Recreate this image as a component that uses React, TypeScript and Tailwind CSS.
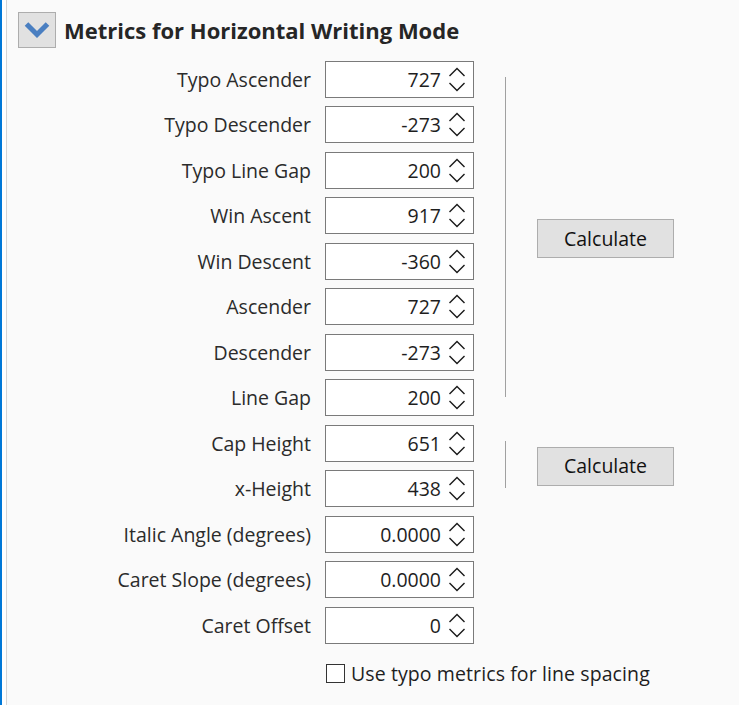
const font = { fontFamily: '"Segoe UI", "Open Sans", "Noto Sans", sans-serif' };

const groupA = [
  ['Typo Ascender', '727'],
  ['Typo Descender', '-273'],
  ['Typo Line Gap', '200'],
  ['Win Ascent', '917'],
  ['Win Descent', '-360'],
  ['Ascender', '727'],
  ['Descender', '-273'],
  ['Line Gap', '200'],
];

const groupB = [
  ['Cap Height', '651'],
  ['x-Height', '438'],
];

const rest = [
  ['Italic Angle (degrees)', '0.0000'],
  ['Caret Slope (degrees)', '0.0000'],
  ['Caret Offset', '0'],
];

function Spin({ value }: { value: string }) {
  return (
    <div className="flex h-[37px] w-[149px] items-center border border-[#7a7a7a] bg-white">
      <span className="flex-1 pr-[7px] text-right text-[19.5px] text-[#1e1e1e]">{value}</span>
      <div className="mr-[7px] flex flex-col gap-[5px]">
        <svg width="18" height="10" viewBox="0 0 18 10" fill="none" stroke="#1a1a1a" strokeWidth="1.4">
          <path d="M1.5 9 L9 1.5 L16.5 9" />
        </svg>
        <svg width="18" height="10" viewBox="0 0 18 10" fill="none" stroke="#1a1a1a" strokeWidth="1.4">
          <path d="M1.5 1 L9 8.5 L16.5 1" />
        </svg>
      </div>
    </div>
  );
}

function Row({ label, value }: { label: string; value: string }) {
  return (
    <div className="flex h-[45.5px] items-center">
      <div className="w-[318px] pr-[14px] text-right text-[19.5px] text-[#2b2b2b]">{label}</div>
      <Spin value={value} />
    </div>
  );
}

function Calc() {
  return (
    <div className="flex pl-[31px]">
      <div className="mt-[20px] mb-[24px] w-px bg-[#a0a0a0]" />
      <div className="flex items-center pl-[31px]">
        <button className="h-[39px] w-[137px] border border-[#adadad] bg-[#e1e1e1] text-[19.5px] text-[#111]">
          Calculate
        </button>
      </div>
    </div>
  );
}

export default function App() {
  return (
    <div className="flex h-[705px] w-[739px] overflow-hidden bg-[#fafafa]" style={font}>
      <div className="w-[2px] bg-[#0078d7]" />
      <div className="w-[4px] bg-white" />
      <div className="w-px bg-[#d4d4d4]" />
      <div className="flex flex-1 flex-col">
        <div className="flex items-center pt-[12px] pl-[11px]">
          <div className="flex h-[36px] w-[38px] items-center justify-center border border-[#adadad] bg-[#e1e1e1]">
            <svg width="26" height="18" viewBox="0 0 26 18" fill="none" stroke="#4a7fc1" strokeWidth="5">
              <path d="M2.5 3 L13 13.5 L23.5 3" />
            </svg>
          </div>
          <span className="ml-[8px] text-[22px] font-bold text-[#262626]">Metrics for Horizontal Writing Mode</span>
        </div>
        <div className="mt-[8.5px] flex flex-col">
          <div className="flex">
            <div className="flex flex-col">
              {groupA.map(([l, v]) => (
                <Row key={l} label={l} value={v} />
              ))}
            </div>
            <Calc />
          </div>
          <div className="flex">
            <div className="flex flex-col">
              {groupB.map(([l, v]) => (
                <Row key={l} label={l} value={v} />
              ))}
            </div>
            <Calc />
          </div>
          {rest.map(([l, v]) => (
            <Row key={l} label={l} value={v} />
          ))}
          <label className="mt-[11px] ml-[319px] flex items-center">
            <span className="h-[19px] w-[19px] border border-[#333] bg-white" />
            <span className="ml-[6px] text-[19.5px] tracking-[0.1px] text-[#1e1e1e]">Use typo metrics for line spacing</span>
          </label>
        </div>
      </div>
    </div>
  );
}
